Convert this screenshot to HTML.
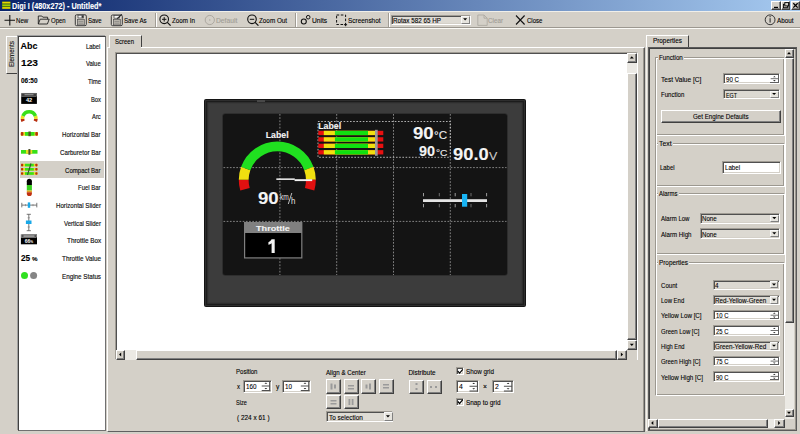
<!DOCTYPE html><html><head><meta charset="utf-8"><style>
html,body{margin:0;padding:0;width:800px;height:434px;overflow:hidden;background:#d4d0c8;}
body{position:relative;font-family:"Liberation Sans",sans-serif;}
div{position:absolute;}
.t{white-space:nowrap;line-height:1;-webkit-text-stroke:0.1px currentColor;}
svg{position:absolute;overflow:visible;}
</style></head><body>
<div style="left:0px;top:0px;width:800px;height:10.8px;background:linear-gradient(to right,#0a246a 0%,#a6caf0 100%);"></div>
<div class="t" style="top:2.00px;font-size:9px;color:#fff;transform-origin:0 0;font-weight:bold;left:12.30px;transform:scaleX(0.808);">Digi I (480x272) - Untitled*</div>
<div style="left:771.3px;top:1px;width:9.3px;height:8.7px;background:#d4d0c8;border-top:1px solid #fff;border-left:1px solid #fff;border-right:1px solid #404040;border-bottom:1px solid #404040;box-sizing:border-box;box-shadow:inset -1px -1px 0 #808080;"></div>
<div style="left:781px;top:1px;width:9.3px;height:8.7px;background:#d4d0c8;border-top:1px solid #fff;border-left:1px solid #fff;border-right:1px solid #404040;border-bottom:1px solid #404040;box-sizing:border-box;box-shadow:inset -1px -1px 0 #808080;"></div>
<div style="left:790.8px;top:1px;width:9.3px;height:8.7px;background:#d4d0c8;border-top:1px solid #fff;border-left:1px solid #fff;border-right:1px solid #404040;border-bottom:1px solid #404040;box-sizing:border-box;box-shadow:inset -1px -1px 0 #808080;"></div>
<div style="left:0px;top:10.8px;width:800px;height:1px;background:#f0efea;"></div>
<div style="left:0px;top:27.4px;width:800px;height:1px;background:#9c9890;"></div>
<div style="left:0px;top:28.4px;width:800px;height:1px;background:#fbfaf6;"></div>
<div class="t" style="top:18.00px;font-size:6.4px;color:#000;transform-origin:0 0;left:16.40px;transform:scaleX(0.952);">New</div>
<div class="t" style="top:18.00px;font-size:6.4px;color:#000;transform-origin:0 0;left:51.30px;transform:scaleX(0.933);">Open</div>
<div class="t" style="top:18.00px;font-size:6.4px;color:#000;transform-origin:0 0;left:87.80px;transform:scaleX(0.939);">Save</div>
<div class="t" style="top:18.00px;font-size:6.4px;color:#000;transform-origin:0 0;left:123.80px;transform:scaleX(0.967);">Save As</div>
<div class="t" style="top:18.00px;font-size:6.4px;color:#000;transform-origin:0 0;left:172.00px;transform:scaleX(0.980);">Zoom In</div>
<div class="t" style="top:18.00px;font-size:6.4px;color:#a09c94;transform-origin:0 0;left:216.40px;transform:scaleX(1.051);">Default</div>
<div class="t" style="top:18.00px;font-size:6.4px;color:#000;transform-origin:0 0;left:259.20px;transform:scaleX(0.988);">Zoom Out</div>
<div class="t" style="top:18.00px;font-size:6.4px;color:#000;transform-origin:0 0;left:311.80px;transform:scaleX(1.043);">Units</div>
<div class="t" style="top:18.00px;font-size:6.4px;color:#000;transform-origin:0 0;left:347.80px;transform:scaleX(1.007);">Screenshot</div>
<div class="t" style="top:18.00px;font-size:6.4px;color:#a09c94;transform-origin:0 0;left:488.00px;transform:scaleX(0.981);">Clear</div>
<div class="t" style="top:18.00px;font-size:6.4px;color:#000;transform-origin:0 0;left:526.50px;transform:scaleX(0.947);">Close</div>
<div class="t" style="top:18.00px;font-size:6.4px;color:#000;transform-origin:0 0;left:777.30px;transform:scaleX(0.987);">About</div>
<div style="left:155.2px;top:13px;width:1px;height:14px;background:#a09c94;"></div>
<div style="left:156.2px;top:13px;width:1px;height:14px;background:#fff;"></div>
<div style="left:294.6px;top:13px;width:1px;height:14px;background:#a09c94;"></div>
<div style="left:295.6px;top:13px;width:1px;height:14px;background:#fff;"></div>
<div style="left:387.8px;top:13px;width:1px;height:14px;background:#a09c94;"></div>
<div style="left:388.8px;top:13px;width:1px;height:14px;background:#fff;"></div>
<div style="left:390.6px;top:14.5px;width:80px;height:10.2px;background:#dedbd4;border-top:1px solid #a09c94;border-left:1px solid #a09c94;border-right:1px solid #fff;border-bottom:1px solid #fff;box-sizing:border-box;box-shadow:inset 1px 1px 0 #505050, inset -1px -1px 0 #d4d0c8;"></div>
<div style="left:461.3px;top:15.5px;width:8.3px;height:8.2px;background:#e6e4de;border-top:1px solid #f8f8f8;border-left:1px solid #f8f8f8;border-right:1px solid #808080;border-bottom:1px solid #808080;box-sizing:border-box;"></div>
<div class="t" style="top:18.00px;font-size:6.4px;color:#000;transform-origin:0 0;left:392.50px;transform:scaleX(0.985);">Rotax 582 65 HP</div>
<div style="left:5.5px;top:36px;width:12.5px;height:37.5px;background:#d4d0c8;border-left:1px solid #fff;border-top:1px solid #fff;border-bottom:1px solid #404040;box-sizing:border-box;"></div>
<div class="t" style="left:8.1px;top:67.2px;font-size:7px;color:#111;transform-origin:0 0;transform:rotate(-90deg) scaleX(0.89);">Elements</div>
<div style="left:17.5px;top:35.5px;width:88px;height:395px;background:#fff;border-left:1px solid #404040;border-top:1px solid #404040;border-right:1px solid #707070;border-bottom:1px solid #707070;box-sizing:border-box;box-shadow:-1px -1px 0 #a0a0a0;"></div>
<div style="left:19.5px;top:161px;width:84px;height:16.6px;background:#d4d0c8;"></div>
<div class="t" style="top:43.00px;font-size:8px;color:#111;transform-origin:0 0;left:86.40px;transform:scaleX(0.736);-webkit-text-stroke:0.18px #111;">Label</div>
<div class="t" style="top:60.00px;font-size:8px;color:#111;transform-origin:0 0;left:86.10px;transform:scaleX(0.740);-webkit-text-stroke:0.18px #111;">Value</div>
<div class="t" style="top:78.00px;font-size:8px;color:#111;transform-origin:0 0;left:87.80px;transform:scaleX(0.744);-webkit-text-stroke:0.18px #111;">Time</div>
<div class="t" style="top:96.00px;font-size:8px;color:#111;transform-origin:0 0;left:90.80px;transform:scaleX(0.725);-webkit-text-stroke:0.18px #111;">Box</div>
<div class="t" style="top:113.00px;font-size:8px;color:#111;transform-origin:0 0;left:92.00px;transform:scaleX(0.733);-webkit-text-stroke:0.18px #111;">Arc</div>
<div class="t" style="top:131.00px;font-size:8px;color:#111;transform-origin:0 0;left:62.40px;transform:scaleX(0.758);-webkit-text-stroke:0.18px #111;">Horizontal Bar</div>
<div class="t" style="top:149.00px;font-size:8px;color:#111;transform-origin:0 0;left:60.00px;transform:scaleX(0.771);-webkit-text-stroke:0.18px #111;">Carburetor Bar</div>
<div class="t" style="top:167.00px;font-size:8px;color:#111;transform-origin:0 0;left:65.30px;transform:scaleX(0.760);-webkit-text-stroke:0.18px #111;">Compact Bar</div>
<div class="t" style="top:184.00px;font-size:8px;color:#111;transform-origin:0 0;left:78.30px;transform:scaleX(0.744);-webkit-text-stroke:0.18px #111;">Fuel Bar</div>
<div class="t" style="top:202.00px;font-size:8px;color:#111;transform-origin:0 0;left:55.80px;transform:scaleX(0.767);-webkit-text-stroke:0.18px #111;">Horizontal Slider</div>
<div class="t" style="top:220.00px;font-size:8px;color:#111;transform-origin:0 0;left:63.80px;transform:scaleX(0.756);-webkit-text-stroke:0.18px #111;">Vertical Slider</div>
<div class="t" style="top:237.00px;font-size:8px;color:#111;transform-origin:0 0;left:66.50px;transform:scaleX(0.795);-webkit-text-stroke:0.18px #111;">Throttle Box</div>
<div class="t" style="top:255.00px;font-size:8px;color:#111;transform-origin:0 0;left:61.80px;transform:scaleX(0.793);-webkit-text-stroke:0.18px #111;">Throttle Value</div>
<div class="t" style="top:273.00px;font-size:8px;color:#111;transform-origin:0 0;left:61.80px;transform:scaleX(0.783);-webkit-text-stroke:0.18px #111;">Engine Status</div>
<div class="t" style="top:42.00px;font-size:9px;color:#000;transform-origin:0 0;font-weight:bold;left:20.60px;">Abc</div>
<div class="t" style="top:59.00px;font-size:9px;color:#000;transform-origin:0 0;font-weight:bold;left:20.60px;transform:scaleX(1.132);">123</div>
<div class="t" style="top:78.00px;font-size:6.6px;color:#000;transform-origin:0 0;font-weight:bold;left:20.60px;transform:scaleX(0.977);">06:50</div>
<div class="t" style="top:254.00px;font-size:9px;color:#000;transform-origin:0 0;font-weight:bold;left:20.80px;transform:scaleX(0.919);">25</div>
<div class="t" style="top:256.00px;font-size:6px;color:#000;transform-origin:0 0;font-weight:bold;left:31.90px;transform:scaleX(1.031);">%</div>
<div style="left:109.3px;top:34.5px;width:32.3px;height:12.5px;background:#d4d0c8;border-left:1px solid #fff;border-top:1px solid #fff;border-right:1px solid #404040;box-sizing:border-box;"></div>
<div class="t" style="top:39.00px;font-size:6.4px;color:#000;transform-origin:0 0;left:114.80px;transform:scaleX(0.937);">Screen</div>
<div style="left:107px;top:46.5px;width:537.5px;height:385px;border-top:1px solid #fff;border-left:1px solid #fff;border-right:1px solid #5a5a5a;border-bottom:1.2px solid #606060;box-sizing:border-box;box-shadow:inset -1px 0 0 #9a968e;"></div>
<div style="left:109.8px;top:46.5px;width:30.8px;height:1.2px;background:#d4d0c8;"></div>
<div style="left:114.8px;top:52px;width:522.9px;height:307.7px;background:#fff;border-top:1px solid #a09c94;border-left:1px solid #a09c94;border-right:1px solid #fff;border-bottom:1px solid #fff;box-sizing:border-box;box-shadow:inset 1px 1px 0 #505050, inset -1px -1px 0 #d4d0c8;"></div>
<div style="left:627.4px;top:62.7px;width:9.5px;height:277.6px;background:#ebe9e4;"></div>
<div style="left:627.2px;top:52.7px;width:9.8px;height:10px;background:#d4d0c8;border-top:1px solid #fff;border-left:1px solid #fff;border-right:1px solid #404040;border-bottom:1px solid #404040;box-sizing:border-box;box-shadow:inset -1px -1px 0 #808080;"></div>
<div style="left:627.2px;top:73.4px;width:9.8px;height:267px;background:#d4d0c8;border-top:1px solid #fff;border-left:1px solid #fff;border-right:1px solid #404040;border-bottom:1px solid #404040;box-sizing:border-box;box-shadow:inset -1px -1px 0 #808080;"></div>
<div style="left:627.2px;top:340.3px;width:9.8px;height:9.4px;background:#d4d0c8;border-top:1px solid #fff;border-left:1px solid #fff;border-right:1px solid #404040;border-bottom:1px solid #404040;box-sizing:border-box;box-shadow:inset -1px -1px 0 #808080;"></div>
<div style="left:125.3px;top:350px;width:491px;height:9.5px;background:#ebe9e4;"></div>
<div style="left:115.6px;top:350px;width:9.8px;height:9.5px;background:#d4d0c8;border-top:1px solid #fff;border-left:1px solid #fff;border-right:1px solid #404040;border-bottom:1px solid #404040;box-sizing:border-box;box-shadow:inset -1px -1px 0 #808080;"></div>
<div style="left:136.3px;top:350px;width:480.8px;height:9.5px;background:#d4d0c8;border-top:1px solid #fff;border-left:1px solid #fff;border-right:1px solid #404040;border-bottom:1px solid #404040;box-sizing:border-box;box-shadow:inset -1px -1px 0 #808080;"></div>
<div style="left:617.1px;top:350px;width:10.1px;height:9.5px;background:#d4d0c8;border-top:1px solid #fff;border-left:1px solid #fff;border-right:1px solid #404040;border-bottom:1px solid #404040;box-sizing:border-box;box-shadow:inset -1px -1px 0 #808080;"></div>
<div style="left:627.2px;top:349.7px;width:9.8px;height:9.9px;background:#d4d0c8;"></div>
<div style="left:204.1px;top:99.0px;width:321.8px;height:208px;background:#3c3c3c;border:1.8px solid #141414;box-sizing:border-box;border-radius:1.5px;box-shadow:inset 0 0 0 1.1px #2e2e2e, inset 0 0 0 2.3px #1c1c1c, inset 0 0 0 3.5px #353535;"></div>
<div style="left:256.5px;top:100.4px;width:8.5px;height:1.6px;background:#484848;"></div>
<div style="left:223.2px;top:113.8px;width:283.6px;height:161.4px;background:#141414;border-radius:2.5px;box-shadow:0 0 0 0.8px #2a2a2a;"></div>
<svg style="left:0;top:0" width="800" height="434"><path d="M279.9,114 V275" stroke="#a8a8a8" stroke-width="0.75" stroke-dasharray="1.7,1.5"/><path d="M336.7,114 V275" stroke="#a8a8a8" stroke-width="0.75" stroke-dasharray="1.7,1.5"/><path d="M393.5,114 V275" stroke="#a8a8a8" stroke-width="0.75" stroke-dasharray="1.7,1.5"/><path d="M450.3,114 V275" stroke="#a8a8a8" stroke-width="0.75" stroke-dasharray="1.7,1.5"/><path d="M223.5,167.6 H506.5" stroke="#a8a8a8" stroke-width="0.75" stroke-dasharray="1.7,1.5"/><path d="M223.5,221.4 H506.5" stroke="#a8a8a8" stroke-width="0.75" stroke-dasharray="1.7,1.5"/><rect x="318" y="121.5" width="132.3" height="35.8" fill="none" stroke="#d8d8d8" stroke-width="0.8" stroke-dasharray="1.6,1.6"/><path d="M240.29,190.61 A38.5,38.5 0 0 1 238.80,179.66 L248.60,179.75 A28.7,28.7 0 0 0 249.71,187.91 Z" fill="#e01010"/><path d="M238.80,179.66 A38.5,38.5 0 0 1 241.12,166.83 L250.33,170.18 A28.7,28.7 0 0 0 248.60,179.75 Z" fill="#f0e010"/><path d="M241.12,166.83 A38.5,38.5 0 0 1 313.48,166.83 L304.27,170.18 A28.7,28.7 0 0 0 250.33,170.18 Z" fill="#20e020"/><path d="M313.48,166.83 A38.5,38.5 0 0 1 315.80,179.66 L306.00,179.75 A28.7,28.7 0 0 0 304.27,170.18 Z" fill="#f0e010"/><path d="M315.80,179.66 A38.5,38.5 0 0 1 314.31,190.61 L304.89,187.91 A28.7,28.7 0 0 0 306.00,179.75 Z" fill="#e01010"/><rect x="276.3" y="178.4" width="18.5" height="1.5" fill="#f4f4f4"/><rect x="294.6" y="179.2" width="17.6" height="1.9" fill="#f4f4f4"/><rect x="318.3" y="130.8" width="65" height="4.3" fill="#e81010"/><rect x="323.8" y="130.8" width="51.2" height="4.3" fill="#f0e010"/><rect x="334.9" y="130.8" width="33.1" height="4.3" fill="#10e010"/><rect x="318.3" y="137.25" width="65" height="4.3" fill="#e81010"/><rect x="323.8" y="137.25" width="51.2" height="4.3" fill="#f0e010"/><rect x="334.9" y="137.25" width="33.1" height="4.3" fill="#10e010"/><rect x="318.3" y="143.70000000000002" width="65" height="4.3" fill="#e81010"/><rect x="323.8" y="143.70000000000002" width="51.2" height="4.3" fill="#f0e010"/><rect x="334.9" y="143.70000000000002" width="33.1" height="4.3" fill="#10e010"/><rect x="318.3" y="150.15" width="65" height="4.3" fill="#e81010"/><rect x="323.8" y="150.15" width="51.2" height="4.3" fill="#f0e010"/><rect x="334.9" y="150.15" width="33.1" height="4.3" fill="#10e010"/><rect x="375" y="129.8" width="2.7" height="26" fill="#9a9a9a"/><rect x="423" y="199.2" width="64" height="2.8" fill="#e4e4e4"/><path d="M423.5,193 V196.3 M423.5,204 V207.3" stroke="#aaa" stroke-width="0.9"/><path d="M439.3,193 V196.3 M439.3,204 V207.3" stroke="#777" stroke-width="0.9"/><path d="M455.2,193 V196.3 M455.2,204 V207.3" stroke="#aaa" stroke-width="0.9"/><path d="M471,193 V196.3 M471,204 V207.3" stroke="#777" stroke-width="0.9"/><path d="M486.6,193 V196.3 M486.6,204 V207.3" stroke="#aaa" stroke-width="0.9"/><rect x="462" y="194" width="5.2" height="12.7" fill="#18b4f4"/><rect x="244" y="222" width="58.4" height="36.5" fill="#808080"/><rect x="245.2" y="233" width="56" height="24.3" fill="#000"/></svg>
<div class="t" style="top:131.00px;font-size:8.8px;color:#f4f4f4;transform-origin:0 0;font-weight:bold;left:265.70px;">Label</div>
<div class="t" style="top:122.00px;font-size:8.8px;color:#f4f4f4;transform-origin:0 0;font-weight:bold;left:318.20px;">Label</div>
<div class="t" style="top:190.00px;font-size:17px;color:#f4f4f4;transform-origin:0 0;font-weight:bold;left:257.50px;transform:scaleX(1.095);">90</div>
<div class="t" style="top:193.00px;font-size:9px;color:#e0e0e0;transform-origin:0 0;left:279.80px;transform:scaleX(0.734);-webkit-text-stroke:0;">km</div>
<div class="t" style="top:197.00px;font-size:9px;color:#e0e0e0;transform-origin:0 0;left:290.60px;transform:scaleX(0.879);-webkit-text-stroke:0;">h</div>
<svg style="left:0;top:0" width="800" height="434"><path d="M288.3,204 L291.8,193" stroke="#d0d0d0" stroke-width="0.9"/></svg>
<div class="t" style="top:125.00px;font-size:17px;color:#f4f4f4;transform-origin:0 0;font-weight:bold;left:413.00px;transform:scaleX(1.095);">90</div>
<div class="t" style="top:130.00px;font-size:11px;color:#eee;transform-origin:0 0;left:434.00px;transform:scaleX(1.053);">°C</div>
<div class="t" style="top:144.00px;font-size:14px;color:#f4f4f4;transform-origin:0 0;font-weight:bold;left:419.00px;transform:scaleX(1.028);">90</div>
<div class="t" style="top:148.00px;font-size:9.5px;color:#eee;transform-origin:0 0;left:435.50px;transform:scaleX(1.079);">°C</div>
<div class="t" style="top:146.00px;font-size:17px;color:#f4f4f4;transform-origin:0 0;font-weight:bold;left:453.00px;transform:scaleX(1.079);">90.0</div>
<div class="t" style="top:151.00px;font-size:11px;color:#ccc;transform-origin:0 0;left:488.80px;transform:scaleX(1.131);">V</div>
<div class="t" style="top:225.00px;font-size:7.7px;color:#f4f4f4;transform-origin:0 0;font-weight:bold;left:255.70px;transform:scaleX(1.186);">Throttle</div>
<svg style="left:0;top:0" width="800" height="434"><path d="M271.6,239.3 H274.7 V253 H271.6 V243.2 Q270.2,244.4 268.4,244.8 V242.2 Q270.6,241.4 271.6,239.3 Z" fill="#f4f4f4"/></svg>
<div class="t" style="top:369.00px;font-size:6.4px;color:#000;transform-origin:0 0;left:236.20px;transform:scaleX(0.944);">Position</div>
<div class="t" style="top:384.00px;font-size:6.4px;color:#000;transform-origin:0 0;left:237.00px;transform:scaleX(0.938);">x</div>
<div class="t" style="top:384.00px;font-size:6.4px;color:#000;transform-origin:0 0;left:276.00px;transform:scaleX(1.031);">y</div>
<div class="t" style="top:400.00px;font-size:6.4px;color:#000;transform-origin:0 0;left:236.20px;transform:scaleX(0.868);">Size</div>
<div class="t" style="top:415.00px;font-size:6.4px;color:#000;transform-origin:0 0;left:236.50px;transform:scaleX(1.010);">( 224 x 61 )</div>
<div style="left:242.5px;top:379.5px;width:29px;height:13px;background:#fff;border-top:1px solid #a09c94;border-left:1px solid #a09c94;border-right:1px solid #fff;border-bottom:1px solid #fff;box-sizing:border-box;box-shadow:inset 1px 1px 0 #505050, inset -1px -1px 0 #d4d0c8;"></div>
<div class="t" style="top:383.00px;font-size:7px;color:#000;transform-origin:0 0;left:245.70px;transform:scaleX(0.899);">160</div>
<div style="left:281.8px;top:379.5px;width:28.8px;height:13px;background:#fff;border-top:1px solid #a09c94;border-left:1px solid #a09c94;border-right:1px solid #fff;border-bottom:1px solid #fff;box-sizing:border-box;box-shadow:inset 1px 1px 0 #505050, inset -1px -1px 0 #d4d0c8;"></div>
<div class="t" style="top:383.00px;font-size:7px;color:#000;transform-origin:0 0;left:285.00px;transform:scaleX(0.899);">10</div>
<div class="t" style="top:370.00px;font-size:6.4px;color:#000;transform-origin:0 0;left:326.30px;transform:scaleX(0.964);">Align &amp; Center</div>
<div style="left:326.3px;top:379.2px;width:14.5px;height:14.5px;background:#d4d0c8;border-top:1px solid #fff;border-left:1px solid #fff;border-right:1px solid #404040;border-bottom:1px solid #404040;box-sizing:border-box;box-shadow:inset -1px -1px 0 #808080;"></div>
<div style="left:344px;top:379.2px;width:14.5px;height:14.5px;background:#d4d0c8;border-top:1px solid #fff;border-left:1px solid #fff;border-right:1px solid #404040;border-bottom:1px solid #404040;box-sizing:border-box;box-shadow:inset -1px -1px 0 #808080;"></div>
<div style="left:361.3px;top:379.2px;width:14.5px;height:14.5px;background:#d4d0c8;border-top:1px solid #fff;border-left:1px solid #fff;border-right:1px solid #404040;border-bottom:1px solid #404040;box-sizing:border-box;box-shadow:inset -1px -1px 0 #808080;"></div>
<div style="left:379px;top:379.2px;width:14.5px;height:14.5px;background:#d4d0c8;border-top:1px solid #fff;border-left:1px solid #fff;border-right:1px solid #404040;border-bottom:1px solid #404040;box-sizing:border-box;box-shadow:inset -1px -1px 0 #808080;"></div>
<div style="left:326.3px;top:394.8px;width:14.5px;height:14.5px;background:#d4d0c8;border-top:1px solid #fff;border-left:1px solid #fff;border-right:1px solid #404040;border-bottom:1px solid #404040;box-sizing:border-box;box-shadow:inset -1px -1px 0 #808080;"></div>
<div style="left:344px;top:394.8px;width:14.5px;height:14.5px;background:#d4d0c8;border-top:1px solid #fff;border-left:1px solid #fff;border-right:1px solid #404040;border-bottom:1px solid #404040;box-sizing:border-box;box-shadow:inset -1px -1px 0 #808080;"></div>
<div style="left:326.3px;top:411.4px;width:67px;height:10.5px;background:#dedbd4;border-top:1px solid #a09c94;border-left:1px solid #a09c94;border-right:1px solid #fff;border-bottom:1px solid #fff;box-sizing:border-box;box-shadow:inset 1px 1px 0 #505050, inset -1px -1px 0 #d4d0c8;"></div>
<div style="left:384px;top:412.4px;width:8.5px;height:8.5px;background:#e6e4de;border-top:1px solid #f8f8f8;border-left:1px solid #f8f8f8;border-right:1px solid #808080;border-bottom:1px solid #808080;box-sizing:border-box;"></div>
<div class="t" style="top:415.00px;font-size:6.4px;color:#000;transform-origin:0 0;left:328.50px;transform:scaleX(1.006);">To selection</div>
<div class="t" style="top:370.00px;font-size:6.4px;color:#000;transform-origin:0 0;left:408.50px;">Distribute</div>
<div style="left:409px;top:379.5px;width:15px;height:14.5px;background:#d4d0c8;border-top:1px solid #fff;border-left:1px solid #fff;border-right:1px solid #404040;border-bottom:1px solid #404040;box-sizing:border-box;box-shadow:inset -1px -1px 0 #808080;"></div>
<div style="left:426.5px;top:379.5px;width:15px;height:14.5px;background:#d4d0c8;border-top:1px solid #fff;border-left:1px solid #fff;border-right:1px solid #404040;border-bottom:1px solid #404040;box-sizing:border-box;box-shadow:inset -1px -1px 0 #808080;"></div>
<div style="left:456px;top:367.3px;width:8.2px;height:8.2px;background:#fff;border-top:1px solid #a09c94;border-left:1px solid #a09c94;border-right:1px solid #fff;border-bottom:1px solid #fff;box-sizing:border-box;box-shadow:inset 1px 1px 0 #505050, inset -1px -1px 0 #d4d0c8;"></div>
<div class="t" style="top:369.00px;font-size:6.4px;color:#000;transform-origin:0 0;left:466.00px;transform:scaleX(0.984);">Show grid</div>
<div style="left:456px;top:397.7px;width:8.2px;height:8.2px;background:#fff;border-top:1px solid #a09c94;border-left:1px solid #a09c94;border-right:1px solid #fff;border-bottom:1px solid #fff;box-sizing:border-box;box-shadow:inset 1px 1px 0 #505050, inset -1px -1px 0 #d4d0c8;"></div>
<div class="t" style="top:400.00px;font-size:6.4px;color:#000;transform-origin:0 0;left:466.00px;">Snap to grid</div>
<div style="left:456px;top:379.5px;width:23.3px;height:13.5px;background:#fff;border-top:1px solid #a09c94;border-left:1px solid #a09c94;border-right:1px solid #fff;border-bottom:1px solid #fff;box-sizing:border-box;box-shadow:inset 1px 1px 0 #505050, inset -1px -1px 0 #d4d0c8;"></div>
<div class="t" style="top:383.00px;font-size:7px;color:#000;transform-origin:0 0;left:459.20px;transform:scaleX(0.976);">4</div>
<div class="t" style="top:384.00px;font-size:6.4px;color:#000;transform-origin:0 0;left:482.50px;transform:scaleX(1.070);">×</div>
<div style="left:491.5px;top:379.5px;width:22.2px;height:13.5px;background:#fff;border-top:1px solid #a09c94;border-left:1px solid #a09c94;border-right:1px solid #fff;border-bottom:1px solid #fff;box-sizing:border-box;box-shadow:inset 1px 1px 0 #505050, inset -1px -1px 0 #d4d0c8;"></div>
<div class="t" style="top:383.00px;font-size:7px;color:#000;transform-origin:0 0;left:494.70px;transform:scaleX(0.976);">2</div>
<div style="left:645.6px;top:35px;width:1px;height:396px;background:#f4f3ef;"></div>
<div style="left:645.8px;top:34.6px;width:43.7px;height:12px;background:#d4d0c8;border-left:1px solid #fff;border-top:1px solid #fff;border-right:1px solid #404040;box-sizing:border-box;"></div>
<div class="t" style="top:38.00px;font-size:6.4px;color:#000;transform-origin:0 0;left:652.90px;">Properties</div>
<div style="left:647.8px;top:47.1px;width:149.4px;height:383.9px;background:#d4d0c8;border:1px solid #5a5a5a;box-sizing:border-box;box-shadow:inset 1px 1px 0 #404040, inset -1px -1px 0 #9a968e;"></div>
<div style="left:649.8px;top:49.3px;width:135px;height:369.3px;background:#d4d0c8;"></div>
<div style="left:784.8px;top:49.3px;width:9px;height:369.3px;background:#ebe9e4;"></div>
<div style="left:784.8px;top:49.3px;width:9px;height:8.5px;background:#d4d0c8;border-top:1px solid #fff;border-left:1px solid #fff;border-right:1px solid #404040;border-bottom:1px solid #404040;box-sizing:border-box;box-shadow:inset -1px -1px 0 #808080;"></div>
<div style="left:784.8px;top:57.8px;width:9.6px;height:265.2px;background:#d4d0c8;border-top:1px solid #fff;border-left:1px solid #fff;border-right:1px solid #404040;border-bottom:1px solid #404040;box-sizing:border-box;box-shadow:inset -1px -1px 0 #808080;"></div>
<div style="left:784.8px;top:408.8px;width:9px;height:8.6px;background:#d4d0c8;border-top:1px solid #fff;border-left:1px solid #fff;border-right:1px solid #404040;border-bottom:1px solid #404040;box-sizing:border-box;box-shadow:inset -1px -1px 0 #808080;"></div>
<div style="left:649.8px;top:418.6px;width:135px;height:9.6px;background:#ebe9e4;"></div>
<div style="left:647.5px;top:418.6px;width:10.2px;height:9.6px;background:#d4d0c8;border-top:1px solid #fff;border-left:1px solid #fff;border-right:1px solid #404040;border-bottom:1px solid #404040;box-sizing:border-box;box-shadow:inset -1px -1px 0 #808080;"></div>
<div style="left:657.7px;top:418.6px;width:110px;height:9.6px;background:#d4d0c8;border-top:1px solid #fff;border-left:1px solid #fff;border-right:1px solid #404040;border-bottom:1px solid #404040;box-sizing:border-box;box-shadow:inset -1px -1px 0 #808080;"></div>
<div style="left:774px;top:418.6px;width:10.8px;height:9.6px;background:#d4d0c8;border-top:1px solid #fff;border-left:1px solid #fff;border-right:1px solid #404040;border-bottom:1px solid #404040;box-sizing:border-box;box-shadow:inset -1px -1px 0 #808080;"></div>
<div style="left:784.8px;top:418.6px;width:9px;height:9.6px;background:#d4d0c8;"></div>
<div style="left:654.6px;top:56.5px;width:130px;height:79.8px;border-top:1px solid #9c9890;border-left:1px solid #9c9890;border-right:1px solid #fff;border-bottom:1px solid #fff;box-sizing:border-box;box-shadow:inset 1px 1px 0 #fff, inset -1px -1px 0 #9c9890;"></div>
<div style="left:658.1px;top:53.5px;width:26.0px;height:6px;background:#d4d0c8;"></div>
<div class="t" style="top:54.00px;font-size:7px;color:#000;transform-origin:0 0;left:659.20px;transform:scaleX(0.887);">Function</div>
<div style="left:654.6px;top:142.7px;width:130px;height:44.5px;border-top:1px solid #9c9890;border-left:1px solid #9c9890;border-right:1px solid #fff;border-bottom:1px solid #fff;box-sizing:border-box;box-shadow:inset 1px 1px 0 #fff, inset -1px -1px 0 #9c9890;"></div>
<div style="left:658.1px;top:139.7px;width:14.8px;height:6px;background:#d4d0c8;"></div>
<div class="t" style="top:140.00px;font-size:7px;color:#000;transform-origin:0 0;left:659.20px;transform:scaleX(0.981);">Text</div>
<div style="left:654.6px;top:193.3px;width:130px;height:62.2px;border-top:1px solid #9c9890;border-left:1px solid #9c9890;border-right:1px solid #fff;border-bottom:1px solid #fff;box-sizing:border-box;box-shadow:inset 1px 1px 0 #fff, inset -1px -1px 0 #9c9890;"></div>
<div style="left:658.1px;top:190.3px;width:20.7px;height:6px;background:#d4d0c8;"></div>
<div class="t" style="top:190.00px;font-size:7px;color:#000;transform-origin:0 0;left:659.20px;transform:scaleX(0.850);">Alarms</div>
<div style="left:654.6px;top:262.3px;width:130px;height:133.7px;border-top:1px solid #9c9890;border-left:1px solid #9c9890;border-right:1px solid #fff;border-bottom:1px solid #fff;box-sizing:border-box;box-shadow:inset 1px 1px 0 #fff, inset -1px -1px 0 #9c9890;"></div>
<div style="left:658.1px;top:259.3px;width:31.2px;height:6px;background:#d4d0c8;"></div>
<div class="t" style="top:259.00px;font-size:7px;color:#000;transform-origin:0 0;left:659.20px;transform:scaleX(0.909);">Properties</div>
<div style="left:654.6px;top:56.5px;width:1px;height:338.5px;background:#9c9890;"></div>
<div style="left:655.6px;top:57.5px;width:1px;height:337.5px;background:#fff;"></div>
<div class="t" style="top:76.00px;font-size:7px;color:#000;transform-origin:0 0;left:660.60px;transform:scaleX(0.938);">Test Value [C]</div>
<div class="t" style="top:91.00px;font-size:7px;color:#000;transform-origin:0 0;left:660.60px;transform:scaleX(0.872);">Function</div>
<div style="left:723.2px;top:73.4px;width:57px;height:10.6px;background:#fff;border-top:1px solid #a09c94;border-left:1px solid #a09c94;border-right:1px solid #fff;border-bottom:1px solid #fff;box-sizing:border-box;box-shadow:inset 1px 1px 0 #505050, inset -1px -1px 0 #d4d0c8;"></div>
<div class="t" style="top:76.00px;font-size:7px;color:#000;transform-origin:0 0;left:726.10px;transform:scaleX(0.879);">90 C</div>
<div style="left:770.2px;top:74.60000000000001px;width:8.8px;height:8.2px;border-right:1.2px solid #606060;border-bottom:1.2px solid #606060;box-sizing:border-box;"></div>
<div style="left:723.2px;top:89.2px;width:57px;height:10px;background:#dcd9d2;border-top:1px solid #a09c94;border-left:1px solid #a09c94;border-right:1px solid #fff;border-bottom:1px solid #fff;box-sizing:border-box;box-shadow:inset 1px 1px 0 #505050, inset -1px -1px 0 #d4d0c8;"></div>
<div style="left:770.2px;top:90.8px;width:8.4px;height:6.8px;background:#e6e4de;border-top:1px solid #f8f8f8;border-left:1px solid #f8f8f8;border-right:1px solid #808080;border-bottom:1px solid #808080;box-sizing:border-box;"></div>
<div class="t" style="top:92.00px;font-size:7px;color:#000;transform-origin:0 0;left:725.90px;transform:scaleX(0.764);">EGT</div>
<div style="left:660.7px;top:109.5px;width:120.5px;height:13.4px;background:#d4d0c8;border-top:1px solid #fff;border-left:1px solid #fff;border-right:1px solid #404040;border-bottom:1px solid #404040;box-sizing:border-box;box-shadow:inset -1px -1px 0 #808080;"></div>
<div class="t" style="top:113.00px;font-size:7px;color:#000;transform-origin:0 0;left:693.20px;transform:scaleX(0.887);">Get Engine Defaults</div>
<div class="t" style="top:164.00px;font-size:7px;color:#000;transform-origin:0 0;left:660.40px;transform:scaleX(0.847);">Label</div>
<div style="left:722.4px;top:161.2px;width:59.1px;height:12.5px;background:#fff;border-top:1px solid #a09c94;border-left:1px solid #a09c94;border-right:1px solid #fff;border-bottom:1px solid #fff;box-sizing:border-box;box-shadow:inset 1px 1px 0 #505050, inset -1px -1px 0 #d4d0c8;"></div>
<div class="t" style="top:164.00px;font-size:7px;color:#000;transform-origin:0 0;left:725.00px;transform:scaleX(0.876);">Label</div>
<div class="t" style="top:215.00px;font-size:7px;color:#000;transform-origin:0 0;left:660.70px;transform:scaleX(0.861);">Alarm Low</div>
<div class="t" style="top:231.00px;font-size:7px;color:#000;transform-origin:0 0;left:660.70px;transform:scaleX(0.881);">Alarm High</div>
<div style="left:699.6px;top:213px;width:80.8px;height:10.5px;background:#dcd9d2;border-top:1px solid #a09c94;border-left:1px solid #a09c94;border-right:1px solid #fff;border-bottom:1px solid #fff;box-sizing:border-box;box-shadow:inset 1px 1px 0 #505050, inset -1px -1px 0 #d4d0c8;"></div>
<div style="left:770.4px;top:214.6px;width:8.4px;height:7.3px;background:#e6e4de;border-top:1px solid #f8f8f8;border-left:1px solid #f8f8f8;border-right:1px solid #808080;border-bottom:1px solid #808080;box-sizing:border-box;"></div>
<div class="t" style="top:215.00px;font-size:7px;color:#000;transform-origin:0 0;left:702.30px;transform:scaleX(0.878);">None</div>
<div style="left:699.6px;top:228.2px;width:80.8px;height:10.8px;background:#dcd9d2;border-top:1px solid #a09c94;border-left:1px solid #a09c94;border-right:1px solid #fff;border-bottom:1px solid #fff;box-sizing:border-box;box-shadow:inset 1px 1px 0 #505050, inset -1px -1px 0 #d4d0c8;"></div>
<div style="left:770.4px;top:229.79999999999998px;width:8.4px;height:7.6000000000000005px;background:#e6e4de;border-top:1px solid #f8f8f8;border-left:1px solid #f8f8f8;border-right:1px solid #808080;border-bottom:1px solid #808080;box-sizing:border-box;"></div>
<div class="t" style="top:231.00px;font-size:7px;color:#000;transform-origin:0 0;left:702.30px;transform:scaleX(0.878);">None</div>
<div class="t" style="top:282.00px;font-size:7px;color:#000;transform-origin:0 0;left:660.70px;transform:scaleX(0.867);">Count</div>
<div style="left:712.7px;top:279.5px;width:67.4px;height:10.5px;background:#dcd9d2;border-top:1px solid #a09c94;border-left:1px solid #a09c94;border-right:1px solid #fff;border-bottom:1px solid #fff;box-sizing:border-box;box-shadow:inset 1px 1px 0 #505050, inset -1px -1px 0 #d4d0c8;"></div>
<div style="left:770.1px;top:281.1px;width:8.4px;height:7.3px;background:#e6e4de;border-top:1px solid #f8f8f8;border-left:1px solid #f8f8f8;border-right:1px solid #808080;border-bottom:1px solid #808080;box-sizing:border-box;"></div>
<div class="t" style="top:282.00px;font-size:7px;color:#000;transform-origin:0 0;left:715.40px;transform:scaleX(0.899);">4</div>
<div class="t" style="top:297.00px;font-size:7px;color:#000;transform-origin:0 0;left:660.70px;transform:scaleX(0.852);">Low End</div>
<div style="left:712.7px;top:294.8px;width:67.4px;height:10.5px;background:#dcd9d2;border-top:1px solid #a09c94;border-left:1px solid #a09c94;border-right:1px solid #fff;border-bottom:1px solid #fff;box-sizing:border-box;box-shadow:inset 1px 1px 0 #505050, inset -1px -1px 0 #d4d0c8;"></div>
<div style="left:770.1px;top:296.40000000000003px;width:8.4px;height:7.3px;background:#e6e4de;border-top:1px solid #f8f8f8;border-left:1px solid #f8f8f8;border-right:1px solid #808080;border-bottom:1px solid #808080;box-sizing:border-box;"></div>
<div class="t" style="top:297.00px;font-size:7px;color:#000;transform-origin:0 0;left:715.40px;transform:scaleX(0.899);">Red-Yellow-Green</div>
<div class="t" style="top:312.00px;font-size:7px;color:#000;transform-origin:0 0;left:660.70px;transform:scaleX(0.889);">Yellow Low [C]</div>
<div style="left:712.7px;top:309.90000000000003px;width:67.4px;height:10.6px;background:#fff;border-top:1px solid #a09c94;border-left:1px solid #a09c94;border-right:1px solid #fff;border-bottom:1px solid #fff;box-sizing:border-box;box-shadow:inset 1px 1px 0 #505050, inset -1px -1px 0 #d4d0c8;"></div>
<div class="t" style="top:312.00px;font-size:7px;color:#000;transform-origin:0 0;left:715.60px;transform:scaleX(0.846);">10 C</div>
<div style="left:770.1px;top:311.1px;width:8.8px;height:8.2px;border-right:1.2px solid #606060;border-bottom:1.2px solid #606060;box-sizing:border-box;"></div>
<div class="t" style="top:328.00px;font-size:7px;color:#000;transform-origin:0 0;left:660.70px;transform:scaleX(0.853);">Green Low [C]</div>
<div style="left:712.7px;top:325.20000000000005px;width:67.4px;height:10.6px;background:#fff;border-top:1px solid #a09c94;border-left:1px solid #a09c94;border-right:1px solid #fff;border-bottom:1px solid #fff;box-sizing:border-box;box-shadow:inset 1px 1px 0 #505050, inset -1px -1px 0 #d4d0c8;"></div>
<div class="t" style="top:328.00px;font-size:7px;color:#000;transform-origin:0 0;left:715.60px;transform:scaleX(0.846);">25 C</div>
<div style="left:770.1px;top:326.40000000000003px;width:8.8px;height:8.2px;border-right:1.2px solid #606060;border-bottom:1.2px solid #606060;box-sizing:border-box;"></div>
<div class="t" style="top:343.00px;font-size:7px;color:#000;transform-origin:0 0;left:660.70px;transform:scaleX(0.816);">High End</div>
<div style="left:712.7px;top:340.7px;width:67.4px;height:10.5px;background:#dcd9d2;border-top:1px solid #a09c94;border-left:1px solid #a09c94;border-right:1px solid #fff;border-bottom:1px solid #fff;box-sizing:border-box;box-shadow:inset 1px 1px 0 #505050, inset -1px -1px 0 #d4d0c8;"></div>
<div style="left:770.1px;top:342.3px;width:8.4px;height:7.3px;background:#e6e4de;border-top:1px solid #f8f8f8;border-left:1px solid #f8f8f8;border-right:1px solid #808080;border-bottom:1px solid #808080;box-sizing:border-box;"></div>
<div class="t" style="top:343.00px;font-size:7px;color:#000;transform-origin:0 0;left:715.40px;transform:scaleX(0.899);">Green-Yellow-Red</div>
<div class="t" style="top:358.00px;font-size:7px;color:#000;transform-origin:0 0;left:660.70px;transform:scaleX(0.846);">Green High [C]</div>
<div style="left:712.7px;top:355.8px;width:67.4px;height:10.6px;background:#fff;border-top:1px solid #a09c94;border-left:1px solid #a09c94;border-right:1px solid #fff;border-bottom:1px solid #fff;box-sizing:border-box;box-shadow:inset 1px 1px 0 #505050, inset -1px -1px 0 #d4d0c8;"></div>
<div class="t" style="top:358.00px;font-size:7px;color:#000;transform-origin:0 0;left:715.60px;transform:scaleX(0.846);">75 C</div>
<div style="left:770.1px;top:357.0px;width:8.8px;height:8.2px;border-right:1.2px solid #606060;border-bottom:1.2px solid #606060;box-sizing:border-box;"></div>
<div class="t" style="top:374.00px;font-size:7px;color:#000;transform-origin:0 0;left:660.70px;transform:scaleX(0.890);">Yellow High [C]</div>
<div style="left:712.7px;top:371.1px;width:67.4px;height:10.6px;background:#fff;border-top:1px solid #a09c94;border-left:1px solid #a09c94;border-right:1px solid #fff;border-bottom:1px solid #fff;box-sizing:border-box;box-shadow:inset 1px 1px 0 #505050, inset -1px -1px 0 #d4d0c8;"></div>
<div class="t" style="top:374.00px;font-size:7px;color:#000;transform-origin:0 0;left:715.60px;transform:scaleX(0.846);">90 C</div>
<div style="left:770.1px;top:372.3px;width:8.8px;height:8.2px;border-right:1.2px solid #606060;border-bottom:1.2px solid #606060;box-sizing:border-box;"></div>
<svg style="left:0;top:0" width="800" height="434"><rect x="2" y="1.5" width="8.5" height="7.5" fill="#4a6a18"/><rect x="2.3" y="1.8" width="8" height="1.6" fill="#e8d800"/><rect x="2.3" y="4.5" width="8" height="1.6" fill="#a0d000"/><rect x="2.3" y="7.1" width="8" height="1.6" fill="#e8d800"/><rect x="774" y="6.8" width="4" height="1.2" fill="#000"/><rect x="783.4" y="4.3" width="4" height="3.4" fill="none" stroke="#000" stroke-width="0.9"/><rect x="784.8" y="2.6" width="3.8" height="3.3" fill="#d4d0c8" stroke="#000" stroke-width="0.9"/><path d="M793.3,3.2 L797.7,7.6 M797.7,3.2 L793.3,7.6" stroke="#000" stroke-width="1.3"/><path d="M4.5,20.2 H15 M9.8,15 V25.5" stroke="#111" stroke-width="1.1"/><path d="M38.3,24 V16 H41.8 L42.8,17.2 H47.6 V19.2" fill="none" stroke="#222" stroke-width="0.9"/><path d="M38.3,24 L40.2,19.2 H49.2 L47.4,24 Z" fill="none" stroke="#222" stroke-width="0.9"/><rect x="75.3" y="14.8" width="11" height="10.9" rx="1.3" fill="#dcd8d0" stroke="#3a3a3a" stroke-width="1"/><rect x="78" y="15.2" width="5.6" height="2.8" fill="#f4f4f4" stroke="#3a3a3a" stroke-width="0.7"/><rect x="81.6" y="15.4" width="1.6" height="2.4" fill="#333"/><rect x="77.4" y="19.6" width="6.9" height="5.4" fill="#b8b4ac" stroke="#505050" stroke-width="0.7"/><path d="M78.5,21.5 H83.2 M78.5,23.2 H83.2" stroke="#707070" stroke-width="0.5"/><rect x="111.3" y="15" width="11" height="10.7" rx="1.3" fill="#dcd8d0" stroke="#3a3a3a" stroke-width="1"/><rect x="114" y="15.4" width="5.6" height="2.8" fill="#f4f4f4" stroke="#3a3a3a" stroke-width="0.7"/><rect x="113.4" y="19.6" width="6.9" height="5.4" fill="#b8b4ac" stroke="#505050" stroke-width="0.7"/><path d="M114.5,21.5 H119.2 M114.5,23.2 H119.2" stroke="#707070" stroke-width="0.5"/><path d="M117.2,18.6 L121.8,14.4" stroke="#222" stroke-width="1.1"/><circle cx="164.2" cy="19.3" r="4.3" fill="none" stroke="#111" stroke-width="1.1"/><path d="M167.3,22.4 L170.6,25.6" stroke="#111" stroke-width="1.3"/><path d="M162,19.3 H166.4 M164.2,17.1 V21.5" stroke="#111" stroke-width="1"/><circle cx="209.8" cy="20" r="4.6" fill="none" stroke="#a8a49c" stroke-width="0.9"/><circle cx="209.8" cy="20" r="0.7" fill="#a8a49c"/><circle cx="252" cy="19.3" r="4.3" fill="none" stroke="#111" stroke-width="1.1"/><path d="M255.1,22.4 L258.4,25.6" stroke="#111" stroke-width="1.3"/><path d="M249.8,19.3 H254.2" stroke="#111" stroke-width="1"/><circle cx="303.8" cy="21.5" r="2.5" fill="none" stroke="#111" stroke-width="1.1"/><circle cx="308.2" cy="17.2" r="1.8" fill="none" stroke="#111" stroke-width="1"/><rect x="336.6" y="15" width="9" height="9.5" fill="none" stroke="#111" stroke-width="1" stroke-dasharray="2.6,1.6"/><path d="M345.6,23.2 V26.2 M344.1,24.7 H347.1" stroke="#111" stroke-width="1"/><path d="M477.8,15 H484 L487.2,18.2 V25.4 H477.8 Z M484,15 V18.2 H487.2" fill="none" stroke="#aaa69e" stroke-width="0.8"/><path d="M516,15.5 L524.6,24.5 M524.6,15.5 L516,24.5" stroke="#111" stroke-width="1.1"/><circle cx="770.1" cy="19.8" r="4.9" fill="none" stroke="#222" stroke-width="0.9"/><path d="M770.1,18.2 V22.6" stroke="#222" stroke-width="1"/><circle cx="770.1" cy="16.7" r="0.6" fill="#222"/><path d="M463.15,18.3 H467.15 L465.15,20.5 Z" fill="#000"/><rect x="21.2" y="93" width="15.7" height="10.9" fill="#000"/><rect x="21.5" y="93.2" width="15.1" height="3.2" fill="#404040" stroke="#999" stroke-width="0.5"/><rect x="24.5" y="94.3" width="9" height="0.9" fill="#aaa"/><text x="29.1" y="102.3" fill="#fff" font-size="5.6" font-weight="bold" text-anchor="middle" font-family="Liberation Sans">42</text><path d="M21.43,121.96 A8.5,8.5 0 0 1 20.72,119.09 L24.31,118.84 A4.9,4.9 0 0 0 24.72,120.49 Z" fill="#b83010"/><path d="M37.68,119.09 A8.5,8.5 0 0 1 36.97,121.96 L33.68,120.49 A4.9,4.9 0 0 0 34.09,118.84 Z" fill="#b83010"/><path d="M20.72,119.09 A8.5,8.5 0 0 1 21.32,115.32 L24.66,116.66 A4.9,4.9 0 0 0 24.31,118.84 Z" fill="#e8e020"/><path d="M37.08,115.32 A8.5,8.5 0 0 1 37.68,119.09 L34.09,118.84 A4.9,4.9 0 0 0 33.74,116.66 Z" fill="#e8e020"/><path d="M21.32,115.32 A8.5,8.5 0 0 1 37.08,115.32 L33.74,116.66 A4.9,4.9 0 0 0 24.66,116.66 Z" fill="#38e018"/><rect x="20.8" y="132" width="17.1" height="3.7" fill="#e8e020"/><rect x="20.8" y="132" width="2.6" height="3.7" rx="1" fill="#b83010"/><rect x="35.3" y="132" width="2.6" height="3.7" rx="1" fill="#b83010"/><rect x="25" y="132" width="9.5" height="3.7" fill="#38e018"/><rect x="28.4" y="131.5" width="2.4" height="4.7" fill="#4a5a20"/><rect x="21" y="150" width="16.5" height="3.7" fill="#38e018"/><rect x="26" y="150" width="6.2" height="3.7" fill="#e8e020"/><rect x="28.4" y="149" width="2" height="5.8" fill="#505030"/><rect x="21" y="163.8" width="16.5" height="2.6" fill="#e8e020"/><rect x="21" y="163.8" width="2.2" height="2.6" rx="0.8" fill="#b83010"/><rect x="35.3" y="163.8" width="2.2" height="2.6" rx="0.8" fill="#b83010"/><rect x="25" y="163.8" width="8.8" height="2.6" fill="#38e018"/><rect x="21" y="168" width="16.5" height="2.6" fill="#e8e020"/><rect x="21" y="168" width="2.2" height="2.6" rx="0.8" fill="#b83010"/><rect x="35.3" y="168" width="2.2" height="2.6" rx="0.8" fill="#b83010"/><rect x="25" y="168" width="8.8" height="2.6" fill="#38e018"/><rect x="21" y="172.2" width="16.5" height="2.6" fill="#e8e020"/><rect x="21" y="172.2" width="2.2" height="2.6" rx="0.8" fill="#b83010"/><rect x="35.3" y="172.2" width="2.2" height="2.6" rx="0.8" fill="#b83010"/><rect x="25" y="172.2" width="8.8" height="2.6" fill="#38e018"/><path d="M31,163.5 L27.5,174.8" stroke="#305030" stroke-width="1.1"/><path d="M26.8,181.3 A2.55,2.55 0 0 1 31.9,181.3 V185 H26.8 Z" fill="#000"/><rect x="26.8" y="185" width="5.1" height="5.5" fill="#3ad020"/><rect x="26.8" y="190.5" width="5.1" height="1.8" fill="#e0a020"/><path d="M26.8,192.3 H31.9 V193.4 A2.55,2.55 0 0 1 26.8,193.4 Z" fill="#c03010"/><path d="M21.8,205.1 H36.8 M21.8,202.8 V207.4 M36.8,202.8 V207.4" stroke="#555" stroke-width="0.8"/><path d="M25.5,204 V206.2 M33,204 V206.2" stroke="#777" stroke-width="0.6"/><rect x="27.8" y="202.4" width="2.4" height="5.4" fill="#18a8e8"/><path d="M28.8,214.3 V230.7 M26.7,214.3 H30.9 M26.7,230.7 H30.9" stroke="#555" stroke-width="0.8"/><path d="M27.6,217.8 H30 M27.6,227 H30" stroke="#777" stroke-width="0.6"/><rect x="25.9" y="220.5" width="5.6" height="3.5" fill="#18a8e8"/><rect x="20.9" y="234.3" width="16.1" height="10" fill="#000"/><rect x="21.2" y="234.6" width="15.5" height="2.9" fill="#555" stroke="#bbb" stroke-width="0.5"/><rect x="23.5" y="235.6" width="11" height="0.9" fill="#ddd"/><text x="29" y="243" fill="#fff" font-size="5" font-weight="bold" text-anchor="middle" font-family="Liberation Sans">66<tspan font-size="3.2">%</tspan></text><circle cx="24.5" cy="275.6" r="3.5" fill="#30e020"/><circle cx="33.6" cy="275.6" r="3.5" fill="#858585"/><path d="M629.8000000000001,58.400000000000006 H633.8000000000001 L631.8000000000001,56.2 Z" fill="#000"/><path d="M629.8000000000001,343.7 H633.8000000000001 L631.8000000000001,345.9 Z" fill="#000"/><path d="M121.2,352.45 V356.45 L119.0,354.45 Z" fill="#000"/><path d="M620.85,352.45 V356.45 L623.0500000000001,354.45 Z" fill="#000"/><rect x="261.7" y="385.50" width="8.2" height="1" fill="#505050"/><rect x="261.7" y="390.00" width="8.6" height="1.1" fill="#505050"/><rect x="269.10" y="381.00" width="1.1" height="10.10" fill="#505050"/><path d="M264.5,383.80 H267.29999999999995 L265.9,382.40 Z M264.5,387.90 H267.29999999999995 L265.9,389.30 Z" fill="#222"/><rect x="300.8" y="385.50" width="8.2" height="1" fill="#505050"/><rect x="300.8" y="390.00" width="8.6" height="1.1" fill="#505050"/><rect x="308.20" y="381.00" width="1.1" height="10.10" fill="#505050"/><path d="M303.6,383.80 H306.4 L305.0,382.40 Z M303.6,387.90 H306.4 L305.0,389.30 Z" fill="#222"/><g fill="#9a9a9a"><rect x="330.5" y="383.5" width="2" height="6"/><rect x="334" y="384.5" width="2" height="4"/><rect x="348" y="385" width="6" height="1.5"/><rect x="348" y="388" width="6" height="1.5"/><rect x="365.5" y="384.5" width="2" height="4"/><rect x="369" y="383.5" width="2" height="6"/><rect x="383" y="384" width="6" height="1.5"/><rect x="383" y="387" width="6" height="1.5"/><rect x="330.5" y="400" width="6" height="1.5"/><rect x="330.5" y="403" width="6" height="1.5"/><rect x="348.5" y="399" width="1.8" height="6"/><rect x="351.7" y="399" width="1.8" height="6"/><rect x="415.5" y="383" width="2" height="2"/><rect x="415.5" y="388" width="2" height="2"/><rect x="430" y="386" width="2" height="2"/><rect x="435" y="386" width="2" height="2"/></g><path d="M385.95,415.34999999999997 H389.95 L387.95,417.54999999999995 Z" fill="#000"/><path d="M457.8,371.1 L459.6,373.1 L462.8,369.3" stroke="#000" stroke-width="1.2" fill="none"/><path d="M457.8,401.5 L459.6,403.5 L462.8,399.7" stroke="#000" stroke-width="1.2" fill="none"/><rect x="469.5" y="385.75" width="8.2" height="1" fill="#505050"/><rect x="469.5" y="390.50" width="8.6" height="1.1" fill="#505050"/><rect x="476.90" y="381.00" width="1.1" height="10.60" fill="#505050"/><path d="M472.3,384.05 H475.09999999999997 L473.7,382.65 Z M472.3,388.15 H475.09999999999997 L473.7,389.55 Z" fill="#222"/><rect x="503.90000000000003" y="385.75" width="8.2" height="1" fill="#505050"/><rect x="503.90000000000003" y="390.50" width="8.6" height="1.1" fill="#505050"/><rect x="511.30" y="381.00" width="1.1" height="10.60" fill="#505050"/><path d="M506.70000000000005,384.05 H509.5 L508.1,382.65 Z M506.70000000000005,388.15 H509.5 L508.1,389.55 Z" fill="#222"/><path d="M787.0,54.25 H791.0 L789.0,52.05 Z" fill="#000"/><path d="M787.0,411.8 H791.0 L789.0,414.0 Z" fill="#000"/><path d="M653.3000000000001,421.1 V425.1 L651.1,423.1 Z" fill="#000"/><path d="M778.1,421.1 V425.1 L780.3000000000001,423.1 Z" fill="#000"/><path d="M770.7,78.7 H778.2" stroke="#606060" stroke-width="0.9"/><path d="M773.1000000000001,77.3 H775.7 L774.4000000000001,76.0 Z M773.1000000000001,80.10000000000001 H775.7 L774.4000000000001,81.4 Z" fill="#333"/><path d="M772.1000000000001,92.9 H776.1000000000001 L774.1000000000001,95.10000000000001 Z" fill="#000"/><path d="M772.3000000000001,216.95 H776.3000000000001 L774.3000000000001,219.14999999999998 Z" fill="#000"/><path d="M772.3000000000001,232.29999999999998 H776.3000000000001 L774.3000000000001,234.49999999999997 Z" fill="#000"/><path d="M772.0000000000001,283.45 H776.0000000000001 L774.0000000000001,285.65 Z" fill="#000"/><path d="M772.0000000000001,298.75 H776.0000000000001 L774.0000000000001,300.95 Z" fill="#000"/><path d="M770.6,315.20000000000005 H778.1" stroke="#606060" stroke-width="0.9"/><path d="M773.0000000000001,313.80000000000007 H775.6 L774.3000000000001,312.50000000000006 Z M773.0000000000001,316.6 H775.6 L774.3000000000001,317.90000000000003 Z" fill="#333"/><path d="M770.6,330.50000000000006 H778.1" stroke="#606060" stroke-width="0.9"/><path d="M773.0000000000001,329.1000000000001 H775.6 L774.3000000000001,327.80000000000007 Z M773.0000000000001,331.90000000000003 H775.6 L774.3000000000001,333.20000000000005 Z" fill="#333"/><path d="M772.0000000000001,344.65 H776.0000000000001 L774.0000000000001,346.84999999999997 Z" fill="#000"/><path d="M770.6,361.1 H778.1" stroke="#606060" stroke-width="0.9"/><path d="M773.0000000000001,359.70000000000005 H775.6 L774.3000000000001,358.40000000000003 Z M773.0000000000001,362.5 H775.6 L774.3000000000001,363.8 Z" fill="#333"/><path d="M770.6,376.40000000000003 H778.1" stroke="#606060" stroke-width="0.9"/><path d="M773.0000000000001,375.00000000000006 H775.6 L774.3000000000001,373.70000000000005 Z M773.0000000000001,377.8 H775.6 L774.3000000000001,379.1 Z" fill="#333"/></svg>
</body></html>
